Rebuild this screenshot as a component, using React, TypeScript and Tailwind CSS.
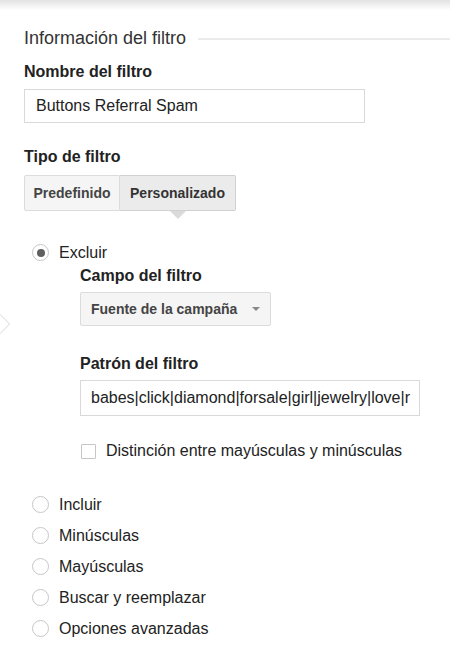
import React from 'react';

function Radio({ label, checked }: { label: string; checked?: boolean }) {
  return (
    <div className="flex items-center h-[31px]">
      <span className="w-[17px] h-[17px] rounded-full border border-[#c6c6c6] bg-white flex items-center justify-center shrink-0">
        {checked && <span className="w-[8px] h-[8px] rounded-full bg-[#5f5f5f]" />}
      </span>
      <span className="ml-[10px] text-[16px] text-[#222]">{label}</span>
    </div>
  );
}

export default function App() {
  return (
    <div className="relative w-[450px] h-[658px] bg-white overflow-hidden text-[#222]"
         style={{ fontFamily: '"Liberation Sans", Arial, sans-serif' }}>
      {/* top shadow */}
      <div className="h-[10px] bg-gradient-to-b from-[#e2e2e2] to-white" />

      {/* left side pointer */}
      <div className="absolute left-[-9px] top-[316px] w-[16px] h-[16px] rotate-45 border border-[#e2e2e2] bg-white" />

      <div className="pl-[24px]">
        <div className="flex items-center mt-[17px]">
          <h2 className="text-[18px] text-[#333] leading-[22px]">Información del filtro</h2>
          <div className="flex-1 h-[2px] bg-[#ebebeb] ml-[12px] mt-[2px]" />
        </div>

        <div className="mt-[13px] text-[16px] font-bold leading-[20px]">Nombre del filtro</div>
        <div className="mt-[7px] w-[341px] h-[34px] border border-[#d9d9d9] flex items-center px-[11px] text-[16px]">
          Buttons Referral Spam
        </div>

        <div className="mt-[24px] text-[16px] font-bold leading-[20px]">Tipo de filtro</div>
        <div className="mt-[8px] flex relative w-[212px]">
          <div className="h-[36px] w-[96px] flex items-center justify-center border border-[#dcdcdc] bg-[#f5f5f5] rounded-l-[2px] text-[14px] font-bold text-[#444]">
            Predefinido
          </div>
          <div className="relative h-[36px] w-[116px] flex items-center justify-center border border-l-0 border-[#d0d0d0] bg-[#ebebeb] rounded-r-[2px] text-[14px] font-bold text-[#333]">
            Personalizado
            <span className="absolute left-1/2 -translate-x-1/2 top-[35px] w-0 h-0 border-l-[8px] border-r-[8px] border-t-[8px] border-l-transparent border-r-transparent border-t-[#dadada]" />
          </div>
        </div>

        <div className="mt-[26px] pl-[8px]">
          <Radio label="Excluir" checked />
        </div>

        <div className="pl-[56px]">
          <div className="mt-[-2px] text-[16px] font-bold leading-[20px]">Campo del filtro</div>
          <div className="mt-[6px] w-[191px] h-[34px] border border-[#dcdcdc] bg-[#f5f5f5] rounded-[2px] flex items-center pl-[10px] pr-[10px] text-[14px] font-bold text-[#444]">
            <span className="flex-1">Fuente de la campaña</span>
            <span className="w-0 h-0 border-l-[4px] border-r-[4px] border-t-[4px] border-l-transparent border-r-transparent border-t-[#888]" />
          </div>

          <div className="mt-[28px] text-[16px] font-bold leading-[20px]">Patrón del filtro</div>
          <div className="mt-[6px] w-[340px] h-[36px] border border-[#d9d9d9] flex items-center px-[10px] text-[16px] whitespace-nowrap overflow-hidden">
            babes|click|diamond|forsale|girl|jewelry|love|r
          </div>

          <div className="mt-[23px] flex items-center">
            <span className="ml-[1px] w-[15px] h-[15px] border border-[#c6c6c6] bg-white rounded-[1px]" />
            <span className="ml-[10px] text-[16px]">Distinción entre mayúsculas y minúsculas</span>
          </div>
        </div>

        <div className="mt-[26px] pl-[8px]">
          <Radio label="Incluir" />
          <Radio label="Minúsculas" />
          <Radio label="Mayúsculas" />
          <Radio label="Buscar y reemplazar" />
          <Radio label="Opciones avanzadas" />
        </div>
      </div>
    </div>
  );
}
